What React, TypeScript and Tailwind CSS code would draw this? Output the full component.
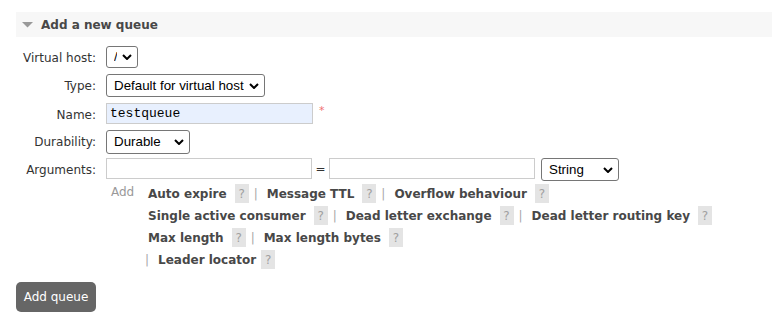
import React from "react"

function Chevron() {
    return (
        <svg className="pointer-events-none absolute right-[6px] top-1/2 -translate-y-1/2" width="10" height="6" viewBox="0 0 10 6">
            <path d="M1 1 L5 5 L9 1" fill="none" stroke="#000" strokeWidth="2" />
        </svg>
    )
}

function Select({ value, options, className }: { value: string, options: string[], className: string }) {
    return (
        <span className={`relative inline-block ${className}`}>
            <select
                defaultValue={value}
                className="h-full w-full appearance-none rounded-[3px] border border-[#767676] bg-white pl-[7px] pr-5 font-['Liberation_Sans',Arial,sans-serif] text-[13.33px] text-black outline-none"
            >
                {options.map((o) => <option key={o}>{o}</option>)}
            </select>
            <Chevron />
        </span>
    )
}

function Help({ className = "ml-2" }: { className?: string }) {
    return <span className={`inline-flex h-[19px] w-[14px] items-center justify-center bg-[#e4e4e4] text-[12px] font-normal text-[#a0a0a0] ${className}`}>?</span>
}

function Sep({ className = "ml-[5px] mr-[9px]" }: { className?: string }) {
    return <span className={`font-normal text-[#a8a8a8] ${className}`}>|</span>
}

function Arg({ label }: { label: string }) {
    return <span className="cursor-pointer font-bold text-[#484848]">{label}</span>
}

function Row({ label, className, children }: { label: string, className: string, children: React.ReactNode }) {
    return (
        <div className={`flex items-start ${className}`}>
            <label className="w-[80px] shrink-0 pt-[4px] text-right leading-4 text-[#333]">{label}</label>
            <div className="ml-[10px] flex items-start">{children}</div>
        </div>
    )
}

export default function App() {
    return (
        <div className="min-h-[321px] w-[772px] bg-white pt-3 font-['DejaVu_Sans',Verdana,sans-serif] text-[12px] text-[#484848]">
            <div className="ml-4 flex h-[25px] items-center bg-[#f7f7f7]">
                <svg className="ml-[6px]" width="11" height="6" viewBox="0 0 11 6">
                    <path d="M0 0 L11 0 L5.5 5.5 Z" fill="#999" />
                </svg>
                <h2 className="ml-2 font-bold text-[#484848]">Add a new queue</h2>
            </div>

            <div className="ml-4 flex flex-col">
                <Row label="Virtual host:" className="mt-[9px]">
                    <Select value="/" options={["/"]} className="h-[22px] w-[32px]" />
                </Row>
                <Row label="Type:" className="mt-[6px]">
                    <Select value="Default for virtual host" options={["Default for virtual host", "Classic", "Quorum", "Stream"]} className="h-[23px] w-[159px]" />
                </Row>
                <Row label="Name:" className="mt-[6px]">
                    <input
                        defaultValue="testqueue"
                        className="h-[21px] w-[207px] border border-[#ccc] bg-[#e8f0fe] pl-[3px] font-['Liberation_Mono','Courier_New',monospace] text-[13px] text-black outline-none"
                    />
                    <span className="ml-[6px] text-[11px] leading-4 text-[#f07070]">*</span>
                </Row>
                <Row label="Durability:" className="mt-[6px]">
                    <Select value="Durable" options={["Durable", "Transient"]} className="h-[24px] w-[84px]" />
                </Row>
                <Row label="Arguments:" className="mt-[4px]">
                    <input className="h-[21px] w-[206px] border border-[#ccc] bg-white outline-none" />
                    <span className="w-[17px] pt-[3px] text-center leading-4 text-[#333]">=</span>
                    <input className="h-[21px] w-[206px] border border-[#ccc] bg-white outline-none" />
                    <Select value="String" options={["String", "Number", "Boolean", "List"]} className="ml-[6px] h-[23px] w-[78px]" />
                </Row>

                <div className="ml-[90px] mt-[3px] flex">
                    <div className="w-[42px] shrink-0 pl-[5px] leading-[17px] text-[#999]">Add</div>
                    <div className="flex flex-col gap-[3px]">
                        <div className="flex h-[19px] items-center">
                            <Arg label="Auto expire" />
                            <Help />
                            <Sep />
                            <Arg label="Message TTL" />
                            <Help />
                            <Sep />
                            <Arg label="Overflow behaviour" />
                            <Help />
                        </div>
                        <div className="flex h-[19px] items-center">
                            <Arg label="Single active consumer" />
                            <Help />
                            <Sep />
                            <Arg label="Dead letter exchange" />
                            <Help />
                            <Sep />
                            <Arg label="Dead letter routing key" />
                            <Help />
                        </div>
                        <div className="flex h-[19px] items-center">
                            <Arg label="Max length" />
                            <Help />
                            <Sep />
                            <Arg label="Max length bytes" />
                            <Help />
                        </div>
                        <div className="-ml-[3px] flex h-[19px] items-center">
                            <Sep className="mr-[9px]" />
                            <Arg label="Leader locator" />
                            <Help className="ml-[5px]" />
                        </div>
                    </div>
                </div>

                <div className="mt-[13px]">
                    <button className="h-[30px] w-[80px] rounded-[5px] bg-[#666] text-[12px] text-white">Add queue</button>
                </div>
            </div>
        </div>
    )
}
